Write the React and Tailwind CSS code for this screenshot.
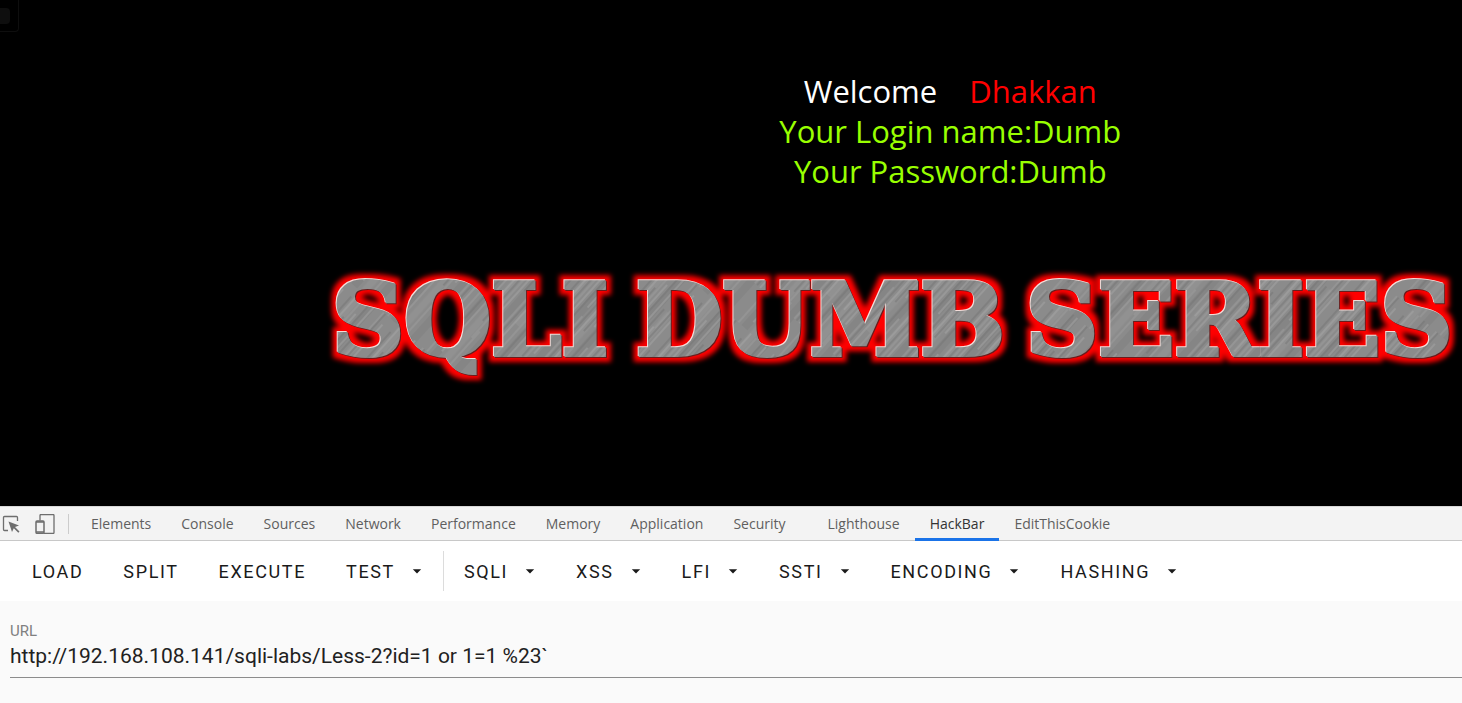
import { useState } from "react";

const tabs = [
  "Elements",
  "Console",
  "Sources",
  "Network",
  "Performance",
  "Memory",
  "Application",
  "Security",
  "Lighthouse",
  "HackBar",
  "EditThisCookie",
];

const actions = ["Load", "Split", "Execute"];
const menus = ["SQLI", "XSS", "LFI", "SSTI", "Encoding", "Hashing"];

function Greeting() {
  return (
    <div className="w-[130%] pt-[71px] text-center font-['Open_Sans',sans-serif] text-[31px] leading-10">
      <p className="text-white">
        Welcome <span className="ml-6 text-[#ff0000]">Dhakkan</span>
      </p>
      <p className="text-[#99ff00]">Your Login name:Dumb</p>
      <p className="text-[#99ff00]">Your Password:Dumb</p>
    </div>
  );
}

function Logo() {
  return (
    <h1 className="pt-16">
      <svg width="1180" height="140" className="ml-80 max-w-none overflow-visible" role="img" aria-label="SQLI DUMB SERIES">
        <defs>
          <pattern id="brushed" width="53" height="230" patternUnits="userSpaceOnUse" patternTransform="rotate(42)">
            <rect width="53" height="230" fill="#8b8b8b" />
            <path d="M4 0V230M34 40V150" stroke="#919191" strokeWidth="7" />
            <path d="M20 0V230M46 90V230" stroke="#858585" strokeWidth="8" />
            <path d="M2 0V150M13 20V160M22 0V90M31 60V190M40 10V100M49 120V220" stroke="#a6a6a6" strokeWidth="1" />
            <path d="M6 30V170M17 0V120M27 40V190M35 0V110M44 80V210M51 10V90" stroke="#757575" strokeWidth="1" />
            <path d="M9 0V190M24 100V190M33 0V60M38 130V230M11 180V230" stroke="#9d9d9d" strokeWidth="1" />
          </pattern>
          <filter id="glow" filterUnits="userSpaceOnUse" x="-20" y="-20" width="1240" height="180" colorInterpolationFilters="sRGB">
            <feMorphology in="SourceAlpha" operator="dilate" radius="5" result="wide" />
            <feGaussianBlur in="wide" stdDeviation="2.5" result="soft" />
            <feFlood floodColor="#ff0000" />
            <feComposite in2="soft" operator="in" result="red" />
            <feOffset in="SourceAlpha" dx="-1" dy="-1" result="up" />
            <feFlood floodColor="#f4dcd8" />
            <feComposite in2="up" operator="in" result="light" />
            <feOffset in="SourceAlpha" dx="1" dy="1" result="down" />
            <feFlood floodColor="#6b1c1c" />
            <feComposite in2="down" operator="in" result="shade" />
            <feMerge>
              <feMergeNode in="red" />
              <feMergeNode in="shade" />
              <feMergeNode in="light" />
              <feMergeNode in="SourceGraphic" />
            </feMerge>
          </filter>
        </defs>
        <g
          filter="url(#glow)"
          fill="url(#brushed)"
          stroke="url(#brushed)"
          strokeWidth="4"
          strokeLinejoin="miter"
          className="font-['DejaVu_Serif',serif] text-[100px] font-bold"
        >
          <text x="12" y="100">SQLI</text>
          <text x="316" y="100">DUMB</text>
          <text x="706" y="100">SERIES</text>
        </g>
      </svg>
    </h1>
  );
}

function InspectIcon() {
  return (
    <svg width="18" height="18" viewBox="0 0 18 18" fill="none" aria-hidden="true">
      <path d="M6 15.5H2.5a1 1 0 0 1-1-1V2.500a1 1 0 0 1 1-1H14.500a1 1 0 0 1 1 1V6" stroke="#6e6e6e" strokeWidth="1.3" />
      <path d="M6.500 6.500L17 10.500L13 12L17.500 16.500L16.300 17.700L11.800 13.200L10 17Z" fill="#6e6e6e" />
    </svg>
  );
}

function DeviceIcon() {
  return (
    <svg width="20" height="20" viewBox="0 0 20 20" fill="none" stroke="#6e6e6e" aria-hidden="true">
      <path d="M5 6.500V1.500a1 1 0 0 1 1-1H18a1 1 0 0 1 1 1V18.500a1 1 0 0 1-1 1H9" strokeWidth="1.3" />
      <rect x="1" y="7" width="8" height="12.300" rx="1" strokeWidth="1.5" />
      <path d="M1 8H9M1 18H9" strokeWidth="1.500" />
    </svg>
  );
}

function DevtoolsTabs({ active, onSelect }) {
  return (
    <nav className="flex h-[35px] items-stretch border-t border-b border-t-[#d8d8d8] border-b-[#c8c8c8] bg-[#f3f3f3] font-['Open_Sans',sans-serif] text-sm">
      <button aria-label="Inspect element" className="flex items-center pl-0.5">
        <InspectIcon />
      </button>
      <button aria-label="Toggle device toolbar" className="flex items-center pl-[15px]">
        <DeviceIcon />
      </button>
      <span className="mr-[7px] ml-[13px] h-5 w-px self-center bg-[#cccccc]" />
      {tabs.map((tab) => (
        <button
          key={tab}
          onClick={() => onSelect(tab)}
          className={`-mb-px border-b-3 px-[15px] pt-0.5 ${tab === "Lighthouse" ? "ml-3" : ""} ${
            tab === active ? "border-[#1a73e8] text-[#333333]" : "border-transparent text-[#5f5f5f]"
          }`}
        >
          {tab}
        </button>
      ))}
    </nav>
  );
}

function ToolButton({ label, menu }) {
  return (
    <button className="flex items-center px-5 uppercase">
      {label}
      {menu && (
        <svg viewBox="0 0 24 24" className="-mr-1 ml-3 size-5 fill-current" aria-hidden="true">
          <path d="M7 10L12 15L17 10H7Z" />
        </svg>
      )}
    </button>
  );
}

export default function App() {
  const [active, setActive] = useState("HackBar");
  const [url, setUrl] = useState("http://192.168.108.141/sqli-labs/Less-2?id=1 or 1=1 %23`");

  return (
    <div className="flex min-h-screen flex-col bg-[#fafafa]">
      <main className="relative h-[506px] overflow-hidden bg-black">
        <div className="absolute top-0 left-0 flex h-8 w-[19px] items-center rounded-br border-r border-b border-[#0e0e0e]">
          <span className="h-4 w-2.5 rounded-r-sm bg-[#0e0e0e]" />
        </div>
        <Greeting />
        <Logo />
      </main>

      <DevtoolsTabs active={active} onSelect={setActive} />

      <div className="flex h-15 shrink-0 items-stretch bg-white pl-3 font-[Roboto,sans-serif] text-[18px] tracking-[0.09em] text-[#1a1a1a]">
        {actions.map((label) => (
          <ToolButton key={label} label={label} />
        ))}
        <ToolButton label="Test" menu />
        <span className="h-10 w-px self-center bg-[#dcdcdc]" />
        {menus.map((label) => (
          <ToolButton key={label} label={label} menu />
        ))}
      </div>

      <section className="flex flex-col pt-5 pl-2.5 font-[Roboto,sans-serif]">
        <label htmlFor="url" className="text-[15px] leading-5 text-[#808080]">
          URL
        </label>
        <input
          id="url"
          type="text"
          value={url}
          spellCheck={false}
          onChange={(e) => setUrl(e.target.value)}
          className="h-[37px] w-full border-b border-[#8c8c8c] bg-transparent pb-1.5 text-[21px] text-[#212121] outline-none"
        />
      </section>
    </div>
  );
}
